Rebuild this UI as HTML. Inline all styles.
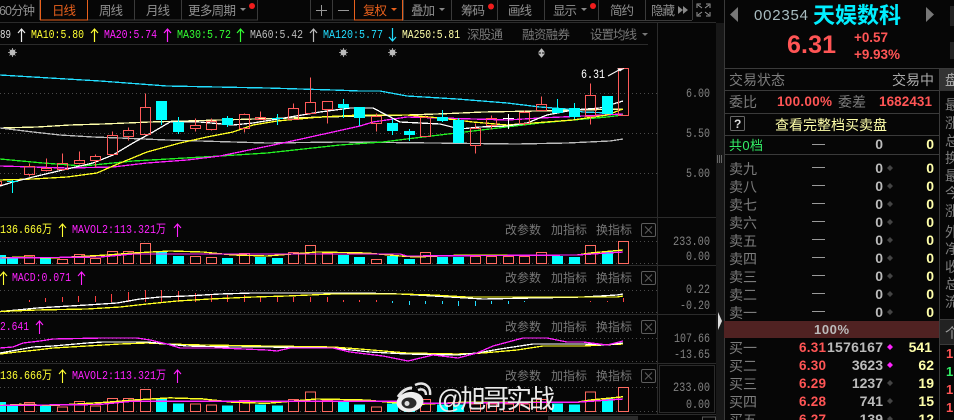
<!DOCTYPE html>
<html><head><meta charset="utf-8"><style>
html,body{margin:0;padding:0;background:#060606;width:954px;height:420px;overflow:hidden}
svg{display:block}
text{font-family:"Liberation Sans","Noto Sans CJK SC",sans-serif;font-size:12px;fill:#8a8a8a}
.m{font-family:"Liberation Mono","Noto Sans CJK SC",monospace;font-size:12px}
.t{font-size:12.5px;fill:#909090}
.b{font-size:12px;fill:#777}
.a{font-family:"Liberation Mono",monospace;font-size:13px;fill:#808080}
.r{font-family:"Liberation Sans",sans-serif;font-weight:bold;fill:#ff5555;font-size:13.5px}
.n{font-family:"Liberation Sans",sans-serif;font-weight:bold;fill:#bbb;font-size:14px;text-anchor:end}
.y{font-family:"Liberation Sans",sans-serif;font-weight:bold;fill:#ffffaa;font-size:14px;text-anchor:end}
.l{font-size:14px;fill:#7c7c7c}
.c{shape-rendering:crispEdges}
.ln{fill:none;stroke-width:1.3;shape-rendering:crispEdges}
</style></head><body>
<svg width="954" height="420" viewBox="0 0 954 420" xmlns="http://www.w3.org/2000/svg">
<rect width="954" height="420" fill="#060606"/>
<!-- grid -->
<g class="c" stroke="#2b2b2b" fill="none">
<path d="M0 22.500H716M0 44.500H648M0 217.500H716M0 265.500H716M0 314.500H716M0 363.500H716M0 414.500H716M657.500 23V415"/>
</g>
<g class="c" stroke="#4a4a4a" stroke-dasharray="1 3" fill="none">
<path d="M0 93.500H660M0 133.500H660M0 173.500H660M0 241.500H660M0 263.500H660M0 290.500H660M0 312.500H660M0 338.500H660M0 361.500H660M0 387.500H657M0 411.500H657"/>
</g>
<!-- toolbar -->
<g class="c" fill="none" stroke="#3a3a3a">
<path d="M39.500 0V20M134.500 0V20M181.500 0V20M257.500 0V20H40M310.500 0V20H354M332.500 0V20M403.500 0V20M451.500 0V20M497.500 0V20M544.500 0V20M598.500 0V20M645.500 0V20M692.500 0V20M402 20.500H692"/>
<rect x="40.500" y="-1" width="47" height="21" stroke="#e8601c"/>
<rect x="354.500" y="-1" width="48" height="21" stroke="#e8601c"/>
</g>
<text class="t" x="-1" y="15" textLength="36">60分钟</text>
<text class="t" x="52" y="15" textLength="24" style="fill:#e8601c">日线</text>
<text class="t" x="99" y="15" textLength="24">周线</text>
<text class="t" x="146" y="15" textLength="24">月线</text>
<text class="t" x="188" y="15" textLength="48">更多周期</text>
<text class="t" x="363" y="15" textLength="24" style="fill:#e8601c">复权</text>
<text class="t" x="411" y="15" textLength="24">叠加</text>
<text class="t" x="461" y="15" textLength="24">筹码</text>
<text class="t" x="508" y="15" textLength="24">画线</text>
<text class="t" x="553" y="15" textLength="24">显示</text>
<text class="t" x="610" y="15" textLength="24">简约</text>
<text class="t" x="651" y="15" textLength="24">隐藏</text>
<path d="M240 8h6l-3 3z" fill="#888"/><path d="M391 8h6l-3 3z" fill="#e8601c"/>
<path d="M439 8h6l-3 3zM581 8h6l-3 3z" fill="#888"/>
<circle cx="252" cy="6" r="3" fill="#f01c1c"/><circle cx="491" cy="6.500" r="3" fill="#f01c1c"/><circle cx="593" cy="6" r="3" fill="#f01c1c"/>
<path d="M316 10.500h11M321.500 5v11M338 10.500h11" stroke="#999" fill="none"/>
<path d="M678 6l5 4-5 4zM683 6l5 4-5 4z" fill="#888"/>
<path d="M697 8V4h4M706 4h4v4M710 12v4h-4M701 16h-4v-4M698 5l4 3M709 5l-4 3M709 15l-4-3M698 15l4-3" stroke="#999" fill="none"/>
<!-- MA labels -->
<text class="m" x="0" y="38" lengthAdjust="spacingAndGlyphs" textLength="11" style="fill:#ddd">89</text>
<text class="m" x="31" y="38" lengthAdjust="spacingAndGlyphs" textLength="53" style="fill:#ffff33">MA10:5.80</text>
<text class="m" x="104" y="38" lengthAdjust="spacingAndGlyphs" textLength="53" style="fill:#ff22ff">MA20:5.74</text>
<text class="m" x="177" y="38" lengthAdjust="spacingAndGlyphs" textLength="54" style="fill:#33ff33">MA30:5.72</text>
<text class="m" x="250" y="38" lengthAdjust="spacingAndGlyphs" textLength="53" style="fill:#bbb">MA60:5.42</text>
<text class="m" x="323" y="38" lengthAdjust="spacingAndGlyphs" textLength="60" style="fill:#22ddff">MA120:5.77</text>
<text class="m" x="402" y="38" lengthAdjust="spacingAndGlyphs" textLength="58" style="fill:#ffffaa">MA250:5.81</text>
<text class="t" x="467" y="39" textLength="36" style="fill:#777">深股通</text>
<text class="t" x="522" y="39" textLength="48" style="fill:#777">融资融券</text>
<text class="t" x="590" y="39" textLength="47" style="fill:#777">设置均线</text>
<path d="M642 33h6l-3 3z" fill="#777"/>
<g fill="none" stroke-width="1.200">
<path d="M21.500 42V29M18 33l3.500-4 3.500 4" stroke="#eee"/>
<path d="M94.500 42V29M91 33l3.500-4 3.500 4" stroke="#ffff33"/>
<path d="M167.500 42V29M164 33l3.500-4 3.500 4" stroke="#ff22ff"/>
<path d="M240.500 42V29M237 33l3.500-4 3.500 4" stroke="#33ff33"/>
<path d="M313.500 42V29M310 33l3.500-4 3.500 4" stroke="#bbb"/>
<path d="M392.500 28V41M389 37l3.500 4 3.500-4" stroke="#22ddff"/>
</g>
<!-- markers -->
<g fill="#bbb" stroke="#bbb">
<circle cx="12.500" cy="52.500" r="2.500"/><path d="M12.500 48v9M8 52.500h9M9.500 49.500l6 6M15.500 49.500l-6 6" stroke-width=".8"/>
<circle cx="343.500" cy="52.500" r="2.500"/><path d="M343.500 48v9M339 52.500h9M340.500 49.500l6 6M346.500 49.500l-6 6" stroke-width=".8"/>
<circle cx="392.500" cy="52.500" r="2.500"/><path d="M392.500 48v9M388 52.500h9M389.500 49.500l6 6M395.500 49.500l-6 6" stroke-width=".8"/>
<path d="M541.500 49l2.500 3h-5zM541.500 57l2.500-3h-5zM541.500 50V56" stroke-width="1"/>
</g>
<!-- MA lines -->
<g class="ln">
<polyline stroke="#ffffaa" points="0,128 37,127 70,125 103,124 150,122 360,116 407,115 450,113.500 483,112 537,111 623,109"/>
<polyline stroke="#22ddff" points="0,75 33,77 100,81 167,86 267,88 333,90 360,91 380,91 407,96 457,99 507,103 540,107 567,109 583,112 610,113"/>
<polyline stroke="#bbb" points="0,128 33,132 60,135 93,137 120,138 167,140 200,141 267,143 340,142 433,143 517,144 567,143 610,141 623,139"/>
<polyline stroke="#22ee22" points="0,159 43,163 83,166 133,161 220,156 267,153 340,145 383,142 423,137 473,131 540,123 607,117 623,115"/>
<polyline stroke="#ff22ff" points="0,166 67,168 113,167 147,163 187,160 220,156 283,143 333,132 360,126 373,122 407,117 507,120 540,118 583,116 623,114"/>
<polyline stroke="#ffff22" points="0,180 33,179 67,177 97,173 113,166 147,152 180,143 207,137 233,132 253,125 277,121 320,117 360,115 407,115 440,118 473,122 507,125 533,123 573,120 607,115 623,109"/>
<polyline stroke="#fff" points="0,186 13,182 33,177 67,169 93,163 113,155 133,143 153,132 170,122 200,122 233,125 253,123 290,117 320,112 350,108 373,108 400,122 440,124 460,129 480,127 507,126 527,123 547,115 573,110 600,108 623,101"/>
</g>
<!-- candles -->
<path class="c" fill="#00ffff" d="M156 101h11v19h-11zM173 122h11v10h-11zM222 118h11v7h-11zM338 104h11v4h-11zM354 107h11v11h-11zM387 123h11v8h-11zM404 131h11v4h-11zM437 117h11v4h-11zM453 120h11v23h-11zM552 108h11v5h-11zM569 108h11v9h-11zM602 96h11v18h-11z"/>
<path class="c" stroke="#00ffff" fill="none" d="M161.500 120V125M178.500 117V134M227.500 116V127M343.500 99V118M359.500 118V126M392.500 119V135M409.500 129V141M442.500 110V122M458.500 118V143M557.500 99V113M574.500 103V119M12.500 180V193M7 181.500H18M277.500 114V125M272 118.500H283"/>
<path class="c" stroke="#fff" fill="none" d="M508.500 114V129M503 118.500H514"/>
<path class="c" stroke="#ff5a5a" fill="none" d="M-4.500 181.500h6v3h-6zM24.500 166.500h10v8h-10zM29.500 163.500v3M29.500 174.500v2M41.500 168.500h10v2h-10zM46.500 158.500v10M46.500 170.500v1M57.500 163.500h10v6h-10zM62.500 153.500v10M62.500 169.500v1M74.500 160.500h10v3h-10zM79.500 151.500v9M79.500 163.500v1M90.500 156.500h10v4h-10zM95.500 154.500v2M95.500 160.500v7M107.500 135.500h10v19h-10zM112.500 131.500v4M123.500 130.500h10v6h-10zM128.500 127.500v3M128.500 136.500v4M140.500 107.500h10v27h-10zM145.500 93.500v14M190.500 125.500h10v3h-10zM195.500 118.500v7M195.500 128.500v3M206.500 121.500h10v8h-10zM211.500 118.500v3M211.500 129.500v1M239.500 114.500h10v14h-10zM244.500 113.500v1M244.500 128.500v4M255.500 117.500h10v2h-10zM260.500 111.500v6M288.500 108.500h10v11h-10zM293.500 103.500v5M305.500 102.500h10v11h-10zM310.500 77.500v25M322.500 101.500h10v8h-10zM327.500 109.500v14M371.500 116.500h10v7h-10zM376.500 113.500v3M376.500 123.500v8M420.500 117.500h10v19h-10zM425.500 115.500v2M470.500 128.500h10v17h-10zM475.500 123.500v5M475.500 145.500v8M486.500 118.500h10v7h-10zM491.500 115.500v3M491.500 125.500v4M519.500 112.500h10v11h-10zM524.500 110.500v2M524.500 123.500v2M536.500 104.500h10v6h-10zM541.500 96.500v8M585.500 95.500h10v21h-10zM590.500 83.500v12M590.500 116.500v8M618.500 68.500h10v47h-10z"/>
<text class="m" x="581" y="78" lengthAdjust="spacingAndGlyphs" textLength="24" style="fill:#fff;font-size:13px">6.31</text>
<path d="M608 76L618 70.500L624 68.500" stroke="#fff" fill="none"/><path d="M617 68.500h7l-4 3z" fill="#fff"/>
<!-- volume -->
<g id="vol">
<path class="c" fill="#00ffff" d="M-5 255h11v9h-11zM7 258h11v6h-11zM40 258h11v6h-11zM156 252h11v12h-11zM173 256h11v8h-11zM222 258h11v6h-11zM255 257h11v7h-11zM272 258h11v6h-11zM338 255h11v9h-11zM354 257h11v7h-11zM387 256h11v8h-11zM404 259h11v5h-11zM437 257h11v7h-11zM453 257h11v7h-11zM552 256h11v8h-11zM569 257h11v7h-11zM602 251h11v13h-11z"/>
<path class="c" stroke="#ff6a60" fill="none" d="M24.500 255.500h10v8h-10zM57.500 259.500h10v4h-10zM74.500 254.500h10v9h-10zM90.500 258.500h10v5h-10zM107.500 251.500h10v12h-10zM123.500 251.500h10v12h-10zM140.500 243.500h10v20h-10zM190.500 256.500h10v7h-10zM206.500 257.500h10v6h-10zM239.500 253.500h10v10h-10zM288.500 252.500h10v11h-10zM305.500 245.500h10v18h-10zM322.500 253.500h10v10h-10zM371.500 259.500h10v4h-10zM420.500 252.500h10v11h-10zM470.500 256.500h10v7h-10zM486.500 256.500h10v7h-10zM503.500 256.500h10v7h-10zM519.500 256.500h10v7h-10zM536.500 252.500h10v11h-10zM585.500 245.500h10v18h-10zM618.500 241.500h10v22h-10z"/>
<polyline class="ln" stroke="#ffff22" points="0,258 20,257 53,258 70,257 107,255 133,253 170,251 203,252 233,255 267,256 317,252 367,253 400,256 417,257 463,255 577,255 590,253 623,250"/>
<polyline class="ln" stroke="#ff22ff" points="0,258 100,257 133,254 400,254 407,256 577,255 623,252"/>
</g>
<use href="#vol" transform="translate(0,411.500) scale(1,1.090) translate(0,-263.500)"/>
<!-- macd -->
<path class="c" stroke="#ff4040" fill="none" d="M29.500 300V302M45.500 298V302M62.500 297V302M78.500 296V302M95.500 296V302M111.500 294V302M128.500 292V302M145.500 290V302M161.500 290V302M178.500 291V302M195.500 293V302M211.500 294V302M227.500 295V302M244.500 295V302M260.500 296V302M277.500 297V302M293.500 297V302M310.500 297V302M327.500 297V302M343.500 300V302M359.500 300V302M376.500 300V302M590.500 301V302M607.500 301V302M623.500 298V302"/>
<path class="c" stroke="#22ddff" fill="none" d="M392.500 301V303M409.500 301V305M425.500 301V304M442.500 301V304M458.500 301V306M475.500 301V306M491.500 301V304M508.500 301V304M524.500 301V302"/>
<polyline class="ln" stroke="#fff" points="0,311.500 17,310 37,308 53,307 87,305 117,303 140,299 160,297 187,296 220,294 253,293 360,293 400,294 450,297 483,299 533,298 583,297 617,295 623,294"/>
<polyline class="ln" stroke="#ffff22" points="0,311.500 37,310 87,309 120,307 147,304 177,301 210,299 253,297 287,296 333,294 400,294 433,295 467,297 533,297 617,297 623,296"/>
<!-- panel 3 -->
<polyline class="ln" stroke="#ffff22" points="0,354 17,352 37,350 53,348 87,346 120,344 147,343 167,344 203,345 267,346 333,347 360,349 407,353 457,354 483,353 517,350 543,346 583,346 623,344"/>
<polyline class="ln" stroke="#fff" points="0,353 17,350 33,347 53,346 87,343 103,342 147,342 167,344 187,346 233,347 267,347 333,348 370,352 407,354 457,355 477,353 500,349 533,344 583,344 607,345 623,343"/>
<polyline class="ln" stroke="#ff22ff" points="0,348 13,347 23,343 40,341 53,339 103,338 137,338 150,340 167,344 180,348 220,348 267,350 277,351 290,348 333,348 350,352 383,356 408,361 433,355 458,358 477,353 493,346 523,338 547,338 567,342 583,342 607,345 623,341"/>
<!-- sub labels -->
<text class="m" x="0" y="233" lengthAdjust="spacingAndGlyphs" textLength="52" style="fill:#ffff33">136.666万</text>
<text class="m" x="72" y="233" lengthAdjust="spacingAndGlyphs" textLength="94" style="fill:#ff22ff">MAVOL2:113.321万</text>
<text class="m" x="12" y="281" lengthAdjust="spacingAndGlyphs" textLength="59" style="fill:#ff22ff">MACD:0.071</text>
<text class="m" x="0" y="330" lengthAdjust="spacingAndGlyphs" textLength="29" style="fill:#ff22ff">2.641</text>
<text class="m" x="0" y="379" lengthAdjust="spacingAndGlyphs" textLength="52" style="fill:#ffff33">136.666万</text>
<text class="m" x="72" y="379" lengthAdjust="spacingAndGlyphs" textLength="94" style="fill:#ff22ff">MAVOL2:113.321万</text>
<g fill="none" stroke-width="1.100">
<path d="M62.500 237V224M59 228l3.500-4 3.500 4M3.500 285V272M0 276l3.500-4 3.500 4M62.500 383V370M59 374l3.500-4 3.500 4" stroke="#ffff33"/>
<path d="M177.500 237V224M174 228l3.500-4 3.500 4M81.500 285V272M78 276l3.500-4 3.500 4M39.500 334V321M36 325l3.500-4 3.500 4M177.500 383V370M174 374l3.500-4 3.500 4" stroke="#ff22ff"/>
</g>
<g>
<text class="b" x="505" y="234" textLength="36">改参数</text><text class="b" x="551" y="234" textLength="36">加指标</text><text class="b" x="596" y="234" textLength="36">换指标</text>
<text class="b" x="505" y="282" textLength="36">改参数</text><text class="b" x="551" y="282" textLength="36">加指标</text><text class="b" x="596" y="282" textLength="36">换指标</text>
<text class="b" x="505" y="331" textLength="36">改参数</text><text class="b" x="551" y="331" textLength="36">加指标</text><text class="b" x="596" y="331" textLength="36">换指标</text>
<text class="b" x="505" y="380" textLength="36">改参数</text><text class="b" x="551" y="380" textLength="36">加指标</text><text class="b" x="596" y="380" textLength="36">换指标</text>
</g>
<g fill="none" stroke="#5c5c5c">
<rect x="641.500" y="223.500" width="14" height="13" rx="1.500"/><path d="M645 226.500l7 7M652 226.500l-7 7"/>
<rect x="641.500" y="271.500" width="14" height="13" rx="1.500"/><path d="M645 274.500l7 7M652 274.500l-7 7"/>
<rect x="641.500" y="320.500" width="14" height="13" rx="1.500"/><path d="M645 323.500l7 7M652 323.500l-7 7"/>
<rect x="641.500" y="369.500" width="14" height="13" rx="1.500"/><path d="M645 372.500l7 7M652 372.500l-7 7"/>
</g>
<rect class="c" x="659.500" y="365.500" width="55" height="47" fill="none" stroke="#2b2b2b"/>
<!-- axis -->
<text class="a" x="686" y="97" lengthAdjust="spacingAndGlyphs" textLength="24">6.00</text>
<text class="a" x="686" y="137" lengthAdjust="spacingAndGlyphs" textLength="24">5.50</text>
<text class="a" x="686" y="177" lengthAdjust="spacingAndGlyphs" textLength="24">5.00</text>
<text class="a" x="673" y="245" lengthAdjust="spacingAndGlyphs" textLength="37">233.00</text>
<text class="a" x="686" y="260" lengthAdjust="spacingAndGlyphs" textLength="24">0.00</text>
<text class="a" x="686" y="293" lengthAdjust="spacingAndGlyphs" textLength="24">0.22</text>
<text class="a" x="680" y="309" lengthAdjust="spacingAndGlyphs" textLength="30">-0.20</text>
<text class="a" x="674" y="342" lengthAdjust="spacingAndGlyphs" textLength="36">107.66</text>
<text class="a" x="674" y="358" lengthAdjust="spacingAndGlyphs" textLength="36">-13.65</text>
<text class="a" x="673" y="391" lengthAdjust="spacingAndGlyphs" textLength="37">233.00</text>
<text class="a" x="686" y="408" lengthAdjust="spacingAndGlyphs" textLength="24">0.00</text>
<!-- watermark -->
<g>
<ellipse cx="410" cy="402" rx="13.500" ry="10" fill="#efefef" transform="rotate(-8 410 402)"/>
<ellipse cx="409" cy="403" rx="7.500" ry="5.500" fill="#2a2a2a"/>
<circle cx="407" cy="403.500" r="2.500" fill="#ddd"/>
<path d="M418 390c5-2 8 1 8 5M415 385c9-4 16 1 15 10" fill="none" stroke="#e4e4e4" stroke-width="2.500"/>
<path d="M398 397c4-6 9-9 14-9" fill="none" stroke="#e4e4e4" stroke-width="3"/>
</g>
<text x="437" y="408" textLength="118" style="font-size:26px;fill:#eaeaea">@旭哥实战</text>
<rect x="548" y="416" width="90" height="4" fill="#2b2b2b"/>
<rect class="c" x="702.500" y="417" width="13" height="6" fill="none" stroke="#555"/>
<!-- strip -->
<rect x="716" y="23" width="8" height="397" fill="#181818"/>
<path d="M718 312l4 9-4 9z" fill="#ddd"/>
<g fill="#666"><rect x="717" y="155" width="1" height="8"/><rect x="719" y="155" width="1" height="8"/><rect x="721" y="155" width="1" height="8"/></g>
<rect x="724" y="0" width="230" height="420" fill="#060606"/>
<!-- right panel -->
<g class="c" stroke="#3a3a3a" fill="none">
<path d="M724.500 0V420M724 68.500H954M724 90.500H939M724 113.500H939M724 135.500H939M724 154.500H939M939.500 68V420M940 319.500H954M940 344.500H954"/>
</g>
<rect x="940" y="69" width="14" height="22" fill="#333"/>
<rect x="940" y="320" width="14" height="24" fill="#222"/>
<rect x="950" y="6" width="4" height="20" fill="#222"/><rect x="950" y="42" width="4" height="17" fill="#222"/>
<path d="M738 7v15l-8-7.500zM926 7v15l8-7.500z" fill="#777"/>
<text x="754" y="20" textLength="54" style="font-size:15px;fill:#a8bcc0">002354</text>
<text x="813" y="23" textLength="88" style="font-size:22px;fill:#00eeff;font-weight:bold">天娱数科</text>
<text x="787" y="53" textLength="49" style="font-size:25px;font-weight:bold;fill:#ff5555">6.31</text>
<text class="r" x="854" y="42" textLength="34">+0.57</text>
<text class="r" x="854" y="59" textLength="46">+9.93%</text>
<text class="l" x="729" y="85" textLength="56">交易状态</text>
<text class="l" x="892" y="85" textLength="42" style="fill:#aaa">交易中</text>
<text class="l" x="729" y="107" textLength="28">委比</text>
<text class="r" x="777" y="106" textLength="55">100.00%</text>
<text class="l" x="838" y="107" textLength="28">委差</text>
<text class="r" x="879" y="106" textLength="53">1682431</text>
<rect x="730.500" y="116.500" width="14" height="14" rx="1" fill="none" stroke="#666"/>
<text x="734" y="128" style="font-size:12px;font-weight:bold;fill:#ddd">?</text>
<text x="775" y="130" textLength="112" style="font-size:14px;fill:#ffffaa">查看完整档买卖盘</text>
<text x="729" y="150" textLength="34" style="font-size:13px;fill:#33ee66">共0档</text>
<g fill="#999" class="c">
<rect x="812" y="144" width="13" height="1"/><rect x="812" y="167" width="13" height="1"/><rect x="812" y="185" width="13" height="1"/><rect x="812" y="203" width="13" height="1"/><rect x="812" y="221" width="13" height="1"/><rect x="812" y="239" width="13" height="1"/><rect x="812" y="257" width="13" height="1"/><rect x="812" y="275" width="13" height="1"/><rect x="812" y="293" width="13" height="1"/><rect x="812" y="311" width="13" height="1"/>
</g>
<text class="n" x="883" y="149">0</text><text class="y" x="934" y="149">0</text>
<g>
<text class="l" x="729" y="174" textLength="28">卖九</text><text class="l" x="729" y="192" textLength="28">卖八</text><text class="l" x="729" y="210" textLength="28">卖七</text><text class="l" x="729" y="228" textLength="28">卖六</text><text class="l" x="729" y="246" textLength="28">卖五</text><text class="l" x="729" y="264" textLength="28">卖四</text><text class="l" x="729" y="282" textLength="28">卖三</text><text class="l" x="729" y="300" textLength="28">卖二</text><text class="l" x="729" y="318" textLength="28">卖一</text>
<text class="l" x="729" y="353" textLength="28">买一</text><text class="l" x="729" y="371" textLength="28">买二</text><text class="l" x="729" y="389" textLength="28">买三</text><text class="l" x="729" y="407" textLength="28">买四</text><text class="l" x="729" y="425" textLength="28">买五</text>
</g>
<text class="n" x="883" y="173">0</text><text class="y" x="934" y="173">0</text>
<text class="n" x="883" y="191">0</text><text class="y" x="934" y="191">0</text>
<text class="n" x="883" y="209">0</text><text class="y" x="934" y="209">0</text>
<text class="n" x="883" y="227">0</text><text class="y" x="934" y="227">0</text>
<text class="n" x="883" y="245">0</text><text class="y" x="934" y="245">0</text>
<text class="n" x="883" y="263">0</text><text class="y" x="934" y="263">0</text>
<text class="n" x="883" y="281">0</text><text class="y" x="934" y="281">0</text>
<text class="n" x="883" y="299">0</text><text class="y" x="934" y="299">0</text>
<text class="n" x="883" y="317">0</text><text class="y" x="934" y="317">0</text>
<path fill="#444" d="M890 165l3 3-3 3-3-3zM890 183l3 3-3 3-3-3zM890 201l3 3-3 3-3-3zM890 219l3 3-3 3-3-3zM890 237l3 3-3 3-3-3zM890 255l3 3-3 3-3-3zM890 273l3 3-3 3-3-3zM890 291l3 3-3 3-3-3zM890 309l3 3-3 3-3-3zM890 380l3 3-3 3-3-3zM890 398l3 3-3 3-3-3zM890 416l3 3-3 3-3-3z"/>
<path fill="#ff22ff" d="M890 344l3 3-3 3-3-3zM890 362l3 3-3 3-3-3z"/>
<rect x="724" y="321" width="215" height="17" fill="#502222"/>
<text x="814" y="334" textLength="35" style="font-family:'Liberation Sans',sans-serif;font-size:13px;font-weight:bold;fill:#bbb">100%</text>
<text class="r" x="799" y="352" textLength="27">6.31</text><text class="n" x="883" y="352" textLength="56">1576167</text><text class="y" x="932" y="352">541</text>
<text class="r" x="799" y="370" textLength="27">6.30</text><text class="n" x="883" y="370">3623</text><text class="y" x="934" y="370">62</text>
<text class="r" x="799" y="388" textLength="27">6.29</text><text class="n" x="883" y="388">1237</text><text class="y" x="934" y="388">19</text>
<text class="r" x="799" y="406" textLength="27">6.28</text><text class="n" x="883" y="406">741</text><text class="y" x="934" y="406">15</text>
<text class="r" x="799" y="424" textLength="27">6.27</text><text class="n" x="883" y="424">139</text><text class="y" x="934" y="424">12</text>
<g>
<text x="945" y="85" style="font-size:14px;fill:#aaa">盘</text>
<text class="l" x="945" y="110">最</text><text class="l" x="945" y="128">涨</text><text class="l" x="945" y="146">总</text><text class="l" x="945" y="163">换</text><text class="l" x="945" y="181">最</text><text class="l" x="945" y="198">今</text><text class="l" x="945" y="216">涨</text><text class="l" x="945" y="237">外</text><text class="l" x="945" y="254">净</text><text class="l" x="945" y="272">收</text><text class="l" x="945" y="289">总</text><text class="l" x="945" y="307">流</text>
<text class="l" x="945" y="338" style="fill:#999">个</text>
</g>
<text x="946" y="358" style="font-size:13px;font-weight:bold;fill:#ff5555">1</text>
<text x="946" y="376" style="font-size:13px;font-weight:bold;fill:#33ee66">1</text>
<text x="946" y="394" style="font-size:13px;font-weight:bold;fill:#ff5555">1</text>
<text x="946" y="412" style="font-size:13px;font-weight:bold;fill:#ff5555">1</text>
</svg>
</body></html>
